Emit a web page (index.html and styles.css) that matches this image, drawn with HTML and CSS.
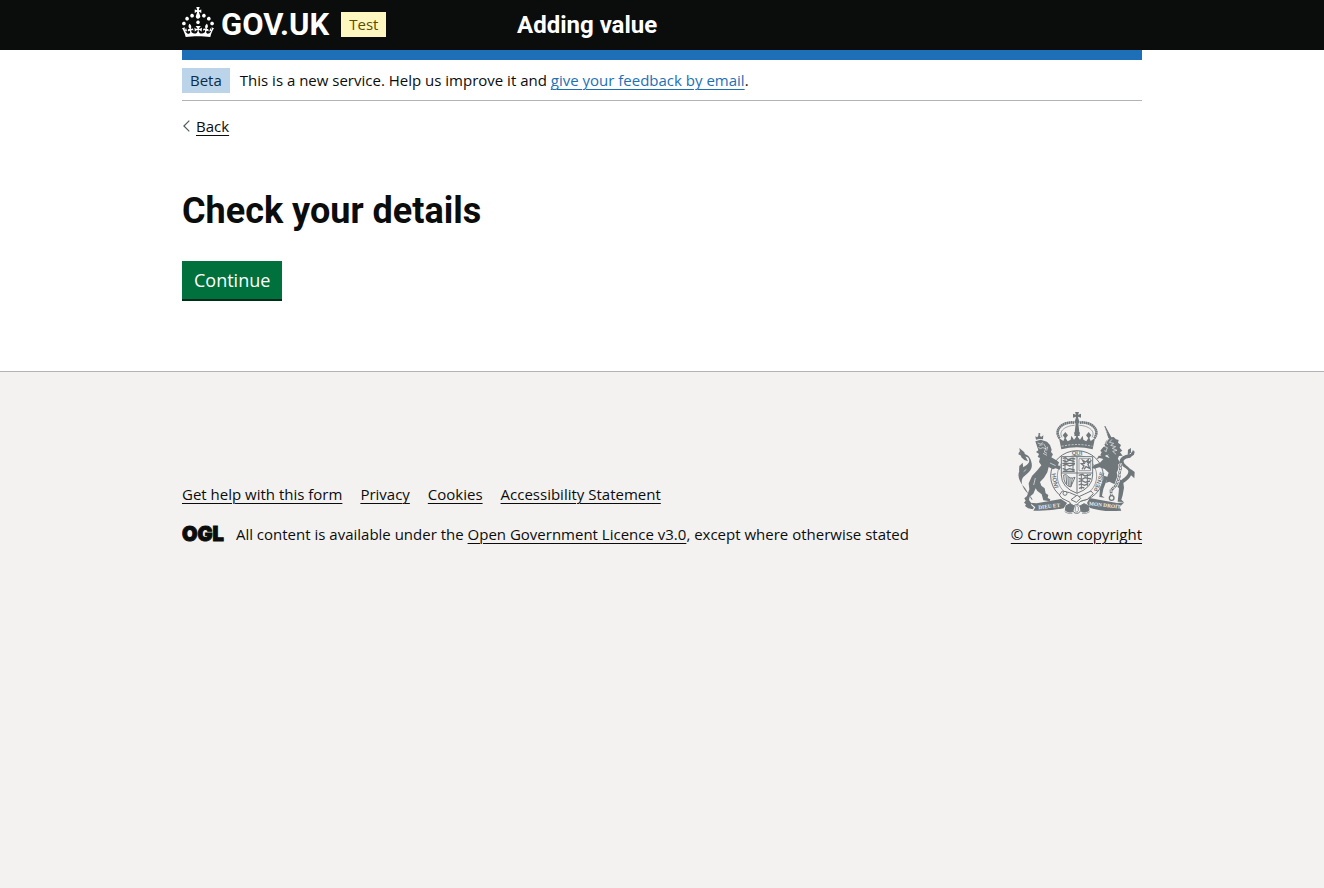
FILE: index.html
```html
<!DOCTYPE html>
<html lang="en">
<head>
<meta charset="utf-8">
<meta name="viewport" content="width=device-width, initial-scale=1">
<title>Check your details - Adding value - GOV.UK</title>
<link rel="stylesheet" href="styles.css">
</head>
<body>
<header class="header">
  <div class="container header-row">
    <div class="header-brand">
      <a class="header-logo" href="#" aria-label="GOV.UK">
        <svg class="header-crown" viewBox="0 0 32 30" aria-hidden="true"><path fill="currentColor" d="M22.6 10.4c-1 .4-2-.1-2.4-1-.4-.9.1-2 1-2.4.9-.4 2 .1 2.4 1s-.1 2-1 2.4m-5.9 6.7c-.9.4-2-.1-2.4-1-.4-.9.1-2 1-2.4.9-.4 2 .1 2.4 1s-.1 2-1 2.4m10.8-3.7c-1 .4-2-.1-2.4-1-.4-.9.1-2 1-2.4.9-.4 2 .1 2.4 1s0 2-1 2.4m3.3 4.8c-1 .4-2-.1-2.4-1-.4-.9.1-2 1-2.4.9-.4 2 .1 2.4 1s-.1 2-1 2.4M17 4.7l2.3 1.2V2.5l-2.3.7-.2-.2.9-3h-3.4l.9 3-.2.2c-.1.1-2.3-.7-2.3-.7v3.4L15 4.7c.1.1.1.2.2.2l-1.3 4c-.1.2-.1.4-.1.6 0 1.1.8 2 1.9 2.2h.7c1-.2 1.9-1.1 1.9-2.1 0-.2 0-.4-.1-.6l-1.3-4c-.1-.2 0-.2.1-.3m-7.6 5.7c.9.4 2-.1 2.4-1 .4-.9-.1-2-1-2.4-.9-.4-2 .1-2.4 1s0 2 1 2.4m-5 3c.9.4 2-.1 2.4-1 .4-.9-.1-2-1-2.4-.9-.4-2 .1-2.4 1s.1 2 1 2.4m-3.2 4.8c.9.4 2-.1 2.4-1 .4-.9-.1-2-1-2.4-.9-.4-2 .1-2.4 1s0 2 1 2.4m14.8 11c4.4 0 8.6.3 12.3.8 1.1-4.5 2.4-7 3.7-8.8l-2.5-.9c.2 1.3.3 1.9 0 2.7-.4-.4-.8-1.1-1.1-2.3l-1.2 4c.7-.5 1.3-.8 2-.9-1.1 2.5-2.6 3.1-3.5 3-1.1-.2-1.7-1.2-1.5-2.1.3-1.2 1.5-1.5 2.1-.1 1.1-2.3-.8-3-2-2.3 1.9-1.9 2.1-3.5.6-5.6-2.1 1.6-2.1 3.2-1.2 5.5-1.2-1.4-3.2-.6-2.5 1.6.9-1.4 2.1-.5 1.9.8-.2 1.1-1.7 2.1-3.5 1.9-2.7-.2-2.9-2.1-2.9-3.6.7-.1 1.9.5 2.9 1.9l.4-4.3c-1.1 1.1-2.1 1.4-3.2 1.4.4-1.2 2.1-3 2.1-3h-5.4s1.7 1.9 2.1 3c-1.1 0-2.1-.2-3.2-1.4l.4 4.3c1-1.4 2.2-2 2.9-1.9-.1 1.5-.2 3.4-2.9 3.6-1.9.2-3.4-.8-3.5-1.9-.2-1.3 1-2.2 1.9-.8.7-2.3-1.2-3-2.5-1.6.9-2.2.9-3.9-1.2-5.5-1.5 2-1.3 3.7.6 5.6-1.2-.7-3.1 0-2 2.3.6-1.4 1.8-1.1 2.1.1.2.9-.3 1.9-1.5 2.1-.9.2-2.4-.5-3.5-3 .6 0 1.2.3 2 .9l-1.2-4c-.3 1.1-.7 1.9-1.1 2.3-.3-.8-.2-1.4 0-2.7l-2.9.9C1.3 23 2.6 25.5 3.7 30c3.7-.5 7.9-.8 12.3-.8"/></svg>
        <span class="header-wordmark">GOV.UK</span>
      </a>
      <strong class="tag tag-yellow">Test</strong>
    </div>
    <a class="header-service" href="#">Adding value</a>
  </div>
</header>

<div class="container page">
  <div class="phase-banner">
    <strong class="tag tag-blue">Beta</strong>
    <span class="phase-text">This is a new service. Help us improve it and <a class="feedback-link" href="#">give your feedback by email</a>.</span>
  </div>
  <a class="back-link" href="#">
    <svg class="back-chevron" viewBox="0 0 7 12" aria-hidden="true"><path d="M6.3.6.9 6l5.4 5.4" fill="none" stroke="#505a5f" stroke-width="1.2"/></svg>
    <span class="back-text">Back</span>
  </a>
  <main class="main">
    <h1 class="title">Check your details</h1>
    <button class="button" type="submit">Continue</button>
  </main>
</div>

<footer class="footer">
  <div class="container footer-row">
    <div class="footer-meta">
      <ul class="footer-links">
        <li><a class="link" href="#">Get help with this form</a></li>
        <li><a class="link" href="#">Privacy</a></li>
        <li><a class="link" href="#">Cookies</a></li>
        <li><a class="link" href="#">Accessibility Statement</a></li>
      </ul>
      <div class="licence">
        <span class="ogl" aria-hidden="true">OGL</span>
        <span>All content is available under the <a class="link" href="#">Open Government Licence v3.0</a>, except where otherwise stated</span>
      </div>
    </div>
    <a class="copyright" href="#">
      <svg class="crest" viewBox="25 21 378 309" aria-hidden="true">
        <g fill="#6f777b" stroke="none">
          <!-- royal crown -->
          <path d="M211 21h12l-3 8 9-3v12l-9-3 2 10h-10l2-10-9 3V26l9 3z"/>
          <circle cx="217" cy="50" r="7"/>
          <path d="M213 55h8l4 38h-16z"/>
          <path d="M170 133l-7-34 13 9 5-12 8 13 9-5 2-12 8 12 9-11 9 11 8-12 2 12 9 5 8-13 5 12 13-9-7 34q-47-13-94 0z"/>
          <path d="M174 91l8-10 8 10-8 10zM208 84l9-11 9 11-9 14zM244 91l8-10 8 10-8 10z"/>
        </g>
        <g fill="none" stroke="#6f777b">
          <path d="M165 100C145 72 178 48 210 53M269 100C289 72 256 48 224 53" stroke-width="8" stroke-dasharray="5 1"/>
          <path d="M172 97C160 77 184 62 210 61M262 97C274 77 250 62 224 61" stroke-width="2"/>
          <path d="M171 124q46-11 92 0" stroke="#f3f2f1" stroke-width="2" stroke-dasharray="6 4"/>
        </g>
        <!-- garter and shield -->
        <ellipse cx="217" cy="213" rx="79" ry="76" fill="#f3f2f1" stroke="#6f777b" stroke-width="3"/>
        <ellipse cx="217" cy="213" rx="59" ry="62" fill="none" stroke="#6f777b" stroke-width="2"/>
        <path d="M170 155h94v55q0 38-47 55-47-17-47-55z" fill="#f3f2f1" stroke="#6f777b" stroke-width="3"/>
        <path d="M217 155v110M170 204h94" stroke="#6f777b" stroke-width="3"/>
        <g fill="none" stroke="#6f777b">
          <path d="M174 160l9-2 7 6 10-4 12 2M174 166l11 4 10-5 15 5M173 175h38M174 182l11-4 10 5 15-5M174 190l11 5 9-4 16 4M174 199h36" stroke-width="4"/>
          <path d="M181 157v42M205 157v42" stroke-width="3"/>
          <path d="M223 161h35v36h-35z" stroke-width="2"/>
          <path d="M232 193l6-10-8-7 9-1-5-9 9 5 8-7-2 8 8-3-7 9 5 12-11-5-6 8" stroke-width="4"/>
          <path d="M177 210q0 32 21 36l13-29q-15 7-26-8zM184 212l2 25M190 215l1 27M196 219v26M203 219l-4 26" stroke-width="3"/>
          <path d="M222 211l11-3 8 5 18-4M222 220l10 3 9-5 18 4M222 230l10-3 10 5 14-4M222 240l8-3 9 4 12-5M223 250l9-3 7 2" stroke-width="4"/>
          <path d="M230 207v46M248 207v37" stroke-width="3"/>
        </g>
        <!-- lion -->
        <g fill="#6f777b">
          <path d="M94 104l-2-10 6 3 5-9 6 8 7-5-1 12q-10-3-21 1z"/>
          <circle cx="104" cy="87" r="3"/>
          <path d="M92 109l16-5 19 6 9 10 5 14-2 7 6 7-5 9 14 8 9 7-3 9 9 4-4 9-12-4-8 3-13-7-4 16-10 16-12 13 4 11 10 8 3 15 8 5-2 9 8 4-2 6-19-3-5-18-13-10-5-8-7 16-11 9-2 10 6 8 1 8 8 7-4 5-14-3-9-7 3-5-6-5 5-6-4-7 8-7 7-20-2-18 10-22 16-17 12-15-7-10 3-12-7-3 4-9-9-6 7-5z"/>
          <path d="M84 284c-7-15-26-24-32-47-2-14 1-19 11-27 12-9 21-19 18-35C78 155 66 144 48 147l-4-8-3 9 14 7c17-2 20 8 18 17-6 11-23 15-29 26-7 15 1 34 17 51 8 12 14 26 20 35z"/>
          <path d="M59 165l-9-8-2-10 14 7 8 15zM43 199l1-16 10-10 2 17zM47 147l-3-18 15 13 3 11z"/>
        </g>
        <g fill="none" stroke="#f3f2f1">
          <path d="M99 114l8 3 8-4M104 121l10-2M101 128q8 5 13 0l10 3M117 116l7 12-5 13 8 4M129 125l-3 12M115 145l12 6" stroke-width="2"/>
          <path d="M57 200l8-7M136 174l17 8M92 219l-5 21" stroke-width="2"/>
        </g>
        <!-- unicorn -->
        <g fill="#6f777b">
          <path d="M299 63l3 0 18 34 7-1 7 7 8 2-2 8 9 7-4 8 8 9-7 5 8 10-11 1-5 11-14-2-13-14-17 8-7-6 4-8-4-5 11-15 6-14 8-6z"/>
          <path d="M304 145l18 9 16 5 8 13-3 16-7 15 7 16 13 14 2 15-4 23-4 13 7 7-18-1 2-18 2-22-13-12-16-8-10 4 3-16 5-15-12-11-16-5-15 4-8-3 9-9 16-6 10-11-11-3-9 4 6-11 17 0 16 8z"/>
          <path d="M310 216l-8 20-6 16-4 20 8 6-16-2 2-24 8-20 4-20z"/>
          <path d="M348 239C366 228 381 217 381 201c-2-14-22-20-24-30-2-8 9-12 20-13l12-16-4-8-5 13-12 2c-14 2-23 11-23 20 1 16 24 20 26 30 1 11-14 21-25 29z"/>
          <path d="M389 220l1-19-13-10-1 17zM376 157l12-8 2-10-15 6zM369 151l1-17 9-5 0 17z"/>
        </g>
        <g fill="none" stroke="#f3f2f1">
          <path d="M313 99l-10 16 7 4M322 103l-8 9 13 3-9 6 15 4-10 5 14 6-13 3 10 9M296 123l12 5-4 11M299 137l7 3" stroke-width="2"/>
          <path d="M289 130l12-10" stroke-width="3"/>
          <path d="M301 70l8 18" stroke-width="2" stroke-dasharray="2 3"/>
          <path d="M346 176c6 17-4 23-2 39l-9 25-16 16 1 18" stroke-width="12"/>
        </g>
        <path d="M346 176c6 17-4 23-2 39l-9 25-16 16 1 18" fill="none" stroke="#6f777b" stroke-width="8" stroke-dasharray="9 2"/>
        <path d="M346 176c6 17-4 23-2 39l-9 25-16 16 1 18" fill="none" stroke="#f3f2f1" stroke-width="3" stroke-dasharray="6 5"/>
        <circle cx="321" cy="279" r="7" fill="#f3f2f1" stroke="#6f777b" stroke-width="4"/>
        <g class="crest-garter" text-anchor="middle">
          <text x="217" y="151">QUI</text>
          <text transform="translate(145 228) rotate(78)">HONI</text>
          <text transform="translate(289 232) rotate(-72)">PENSE</text>
        </g>
        <!-- ribbon and base -->
        <path d="M76 293l20 2 73-13 18 12-10 16q-42 9-91 7l6-10z" fill="#6f777b"/>
        <path d="M255 279l82 15 22-2-14 14 5 11q-58 5-95-9l-8-14z" fill="#6f777b"/>
        <g class="crest-motto" text-anchor="middle">
          <text transform="translate(134 309) rotate(-6)">DIEU ET</text>
          <text transform="translate(300 306) rotate(6)">MON DROIT</text>
        </g>
        <g fill="#f3f2f1" stroke="#6f777b" stroke-width="3">
          <path d="M173 258l22 5 28 12 36-17 7 8-18 17-19 5-11 9-7 17-10-1-5-21-24-12-8-10z"/>
          <path d="M199 284l19-14 10 10-13 12z"/>
          <circle cx="181" cy="265" r="6"/>
          <circle cx="216" cy="312" r="13"/>
          <path d="M184 302l13-6 12 7-5 17-12 2-10-6zM251 302l-13-6-12 7 5 17 12 2 10-6z" fill="#6f777b"/>
          <path d="M212 306l4-4 5 4v11l-5 5-4-5zM180 320l10 5 13 0M255 320l-10 5-13 0" stroke-width="2"/>
        </g>
      </svg>
      <span class="copyright-text">© Crown copyright</span>
    </a>
  </div>
</footer>
</body>
</html>
```
FILE: styles.css
```css
* { box-sizing: border-box; }

html { background: #f3f2f1; }

body {
  margin: 0;
  background: #fff;
  color: #0b0c0c;
  font-family: "Open Sans", "Liberation Sans", sans-serif;
  font-size: 15px;
  line-height: 20px;
}

a { color: inherit; }

.container {
  max-width: 960px;
  margin: 0 auto;
}

.header {
  height: 50px;
  background: #0b0c0c;
  color: #fff;
}

.header-row {
  display: flex;
  align-items: center;
  height: 60px;
  border-bottom: 10px solid #1d70b8;
}

.page { padding-top: 10px; }

.header-brand {
  display: flex;
  align-items: center;
  flex: 0 0 335px;
}

.header-logo,
.header-service {
  color: #fff;
  text-decoration: none;
}

.header-logo {
  display: flex;
  align-items: center;
  gap: 7px;
  margin-right: 12px;
}

.header-crown {
  width: 32px;
  height: 30px;
  margin-bottom: 6px;
}

.header-wordmark {
  font-family: Roboto, sans-serif;
  font-size: 31px;
  line-height: 30px;
  font-weight: 700;
}

.header-service {
  font-family: Roboto, sans-serif;
  font-size: 24px;
  line-height: 30px;
  font-weight: 700;
}

.tag {
  padding: 2px 8px 3px;
  font-weight: 400;
}

.tag-yellow { margin-bottom: 1px; background: #fff7bf; color: #594d00; }
.tag-blue { background: #bbd4ea; color: #0c2d4a; }

.phase-banner {
  display: flex;
  align-items: flex-start;
  gap: 10px;
  padding: 8px 0 7px;
  border-bottom: 1px solid #b1b4b6;
}

.phase-text { padding-top: 2px; }

.link,
.feedback-link,
.back-text,
.copyright-text {
  text-decoration: underline;
  text-decoration-thickness: 1px;
  text-underline-offset: 3px;
}

.feedback-link { color: #1d70b8; }

.back-link {
  display: flex;
  align-items: center;
  gap: 6px;
  width: fit-content;
  margin-top: 15px;
  padding-left: 1px;
  text-decoration: none;
}

.back-chevron { width: 7px; height: 12px; }

.main { padding: 55px 0 70px; }

.title {
  margin: 0 0 30px;
  font-family: Roboto, sans-serif;
  font-size: 36px;
  line-height: 40px;
  font-weight: 700;
}

.button {
  display: block;
  padding: 9px 12px;
  border: 0;
  border-bottom: 2px solid #002d18;
  background: #00703c;
  color: #fff;
  font-family: inherit;
  font-size: 18px;
  line-height: 20px;
}

.footer {
  padding: 40px 0;
  border-top: 1px solid #b1b4b6;
  background: #f3f2f1;
}

.footer-row {
  display: flex;
  align-items: flex-end;
  justify-content: space-between;
}

.footer-links {
  display: flex;
  gap: 18px;
  margin: 0 0 20px;
  padding: 0;
  list-style: none;
}

.licence {
  display: flex;
  align-items: center;
  gap: 12px;
}

.ogl {
  font-family: Inter, sans-serif;
  font-size: 20px;
  line-height: 20px;
  font-weight: 900;
  -webkit-text-stroke: 1px #0b0c0c;
}

.copyright {
  display: flex;
  flex-direction: column;
  align-items: center;
  gap: 9px;
  text-decoration: none;
}

.crest { width: 126px; height: 103px; }

.crest-motto {
  fill: #f3f2f1;
  font-family: "Liberation Serif", serif;
  font-size: 16px;
  font-weight: 700;
}

.crest-garter {
  fill: #6f777b;
  font-family: "Liberation Sans", sans-serif;
  font-size: 18px;
  font-weight: 700;
}
```
